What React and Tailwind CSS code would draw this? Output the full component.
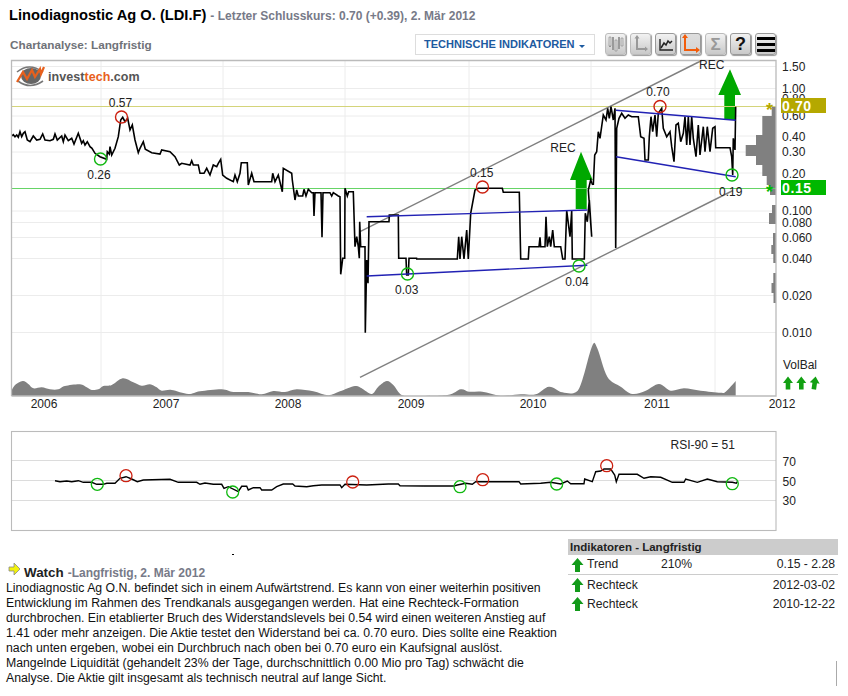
import React from "react";

const pts = (arr, ox, oy, s = 3) => {
  const out = [];
  for (let i = 0; i < arr.length; i += 2) out.push(`${(ox + arr[i] / s).toFixed(1)},${(oy + arr[i + 1] / s).toFixed(1)}`);
  return out.join(" ");
};

const smooth = (arr, ox, oy, s = 3) => {
  const p = [];
  for (let i = 0; i < arr.length; i += 2) p.push([ox + arr[i] / s, oy + arr[i + 1] / s]);
  let d = `M${p[0][0].toFixed(1)} 396 L${p[0][0].toFixed(1)} ${p[0][1].toFixed(1)}`;
  for (let i = 0; i < p.length - 1; i++) {
    const a = p[Math.max(i - 1, 0)], b = p[i], c = p[i + 1], e = p[Math.min(i + 2, p.length - 1)];
    const c1 = [b[0] + (c[0] - a[0]) / 6, b[1] + (c[1] - a[1]) / 6];
    const c2 = [c[0] - (e[0] - b[0]) / 6, c[1] - (e[1] - b[1]) / 6];
    d += ` C${c1[0].toFixed(1)} ${c1[1].toFixed(1)} ${c2[0].toFixed(1)} ${c2[1].toFixed(1)} ${c[0].toFixed(1)} ${c[1].toFixed(1)}`;
  }
  return d + ` L${p[p.length - 1][0].toFixed(1)} 396 Z`;
};

const price1 = [35,408,40,404,45,410,50,405,55,412,60,395,65,410,70,400,75,395,82,420,90,425,100,408,110,420,120,418,128,402,135,420,150,422,160,418,165,402,172,420,185,408,190,425,195,405,205,422,215,415,222,432,235,400,245,430,250,422,255,435,262,425,270,440,276,445,285,460,300,470,320,478,322,455,328,462,330,440,335,465,345,445,355,410,362,360,368,352,375,365,383,355,390,390,397,375,405,420,415,458,420,445,430,425,436,448,455,458,480,462,485,450,510,455,525,470,538,495,545,490,570,495,575,482,580,495,595,495,600,520,612,520,620,505,630,525,640,495,650,500,655,490,662,478,668,525,680,535,700,545,705,525,712,545,720,520,724,488,742,488,745,555,755,520,762,545,815,545,818,520,825,545,835,525,847,575,850,505,875,520,877,540];
const price2 = [877,0,885,60,890,30,895,48,908,48,912,28,918,48,925,28,935,38,940,38,942,108,945,38,963,38,966,172,969,38,990,38,995,48,1000,38,1015,48,1020,50,1022,283,1028,235,1034,235,1035,25,1042,48,1046,35,1060,35,1065,200,1070,170,1075,200,1078,235,1079,125,1082,200,1095,200,1096,458,1100,240,1104,310,1107,125,1167,125,1168,105,1195,105,1196,235,1218,235,1220,285,1225,285,1227,235,1252,235];
const price3 = [228,237,352,237,356,170,360,237,365,170,372,237,380,150,385,237,392,100,405,30,415,25,487,25,490,37,538,37,542,237,565,237,567,200,597,200,600,172,602,200,615,200,618,110,622,200,628,170,632,200,638,150,643,200,662,200,668,237,675,237,680,92,690,170,695,92,697,237,733,237,736,100,742,125,748,60,755,170,745,30,752,0,758,15];
const price4 = [70,270,74,180,80,170,85,110,90,130,100,60,108,75,113,40,118,70,123,35,130,75,135,40,137,459,140,100,147,70,155,55,165,70,175,60,185,65,205,65,212,125,222,130,225,195,235,195,238,125,243,65,248,110,255,60,260,125,265,55,275,40,280,100,290,125,300,110,305,155,312,200,318,90,325,85,332,140,340,115,345,65,350,150,355,65,360,150,365,65,370,130,378,185,385,90,390,180,400,95,405,170,412,95,420,170,428,100,435,95,437,158,480,158,485,185,488,240,490,130,495,165,497,35];
const vol1 = [33,635,45,615,68,603,85,612,100,625,125,622,150,628,175,628,195,618,240,613,260,622,275,630,295,628,310,618,335,615,368,595,400,607,425,617,450,613,470,622,485,632,515,630,565,642,600,634,665,628,700,636,745,636,785,643,820,633,855,636,890,628,940,634,985,646,1020,634,1065,618,1085,625,1115,642,1135,620,1160,603,1180,615,1205,645,1240,648];
const vol2 = [-30,648,70,645,110,628,135,635,175,635,230,647,290,643,335,643,375,620,415,637,455,637,475,600,505,497,520,505,550,590,590,620,625,642,665,632,705,612,740,632,780,625,830,632,890,638,905,635,935,603];
const rsi1 = [165,167,180,170,200,168,215,170,235,167,250,172,275,172,290,178,310,178,320,175,345,175,360,160,378,155,395,162,412,170,430,165,510,163,535,172,590,172,600,178,615,174,640,178,665,178,672,190,685,185,715,200,725,184,740,184,745,195,760,188,780,188,785,195,815,195,830,185,850,177,878,177,885,183,920,185,940,182,965,180,1020,180,1025,188,1035,178,1100,180,1165,177,1195,177,1200,182,1272,183];
const rsi2 = [0,183,90,183,100,180,125,175,145,178,155,170,285,170,290,177,350,175,380,172,410,177,430,168,440,176,480,176,482,162,505,170,515,140,530,138,540,132,560,132,572,150,577,170,585,148,640,148,660,160,680,155,710,157,745,172,780,172,785,162,820,172,850,162,880,170,925,172,937,175,940,170];

const gridV = [101, 223, 345, 469, 591, 715];
const gridH = [66.5, 88.5, 99, 116, 136, 152, 173, 211, 222.5, 237.5, 258.5, 295.5, 332.5];
const axis = [["1.50",71],["1.00",93],["0.80",103],["0.60",120],["0.40",141],["0.30",156],["0.20",178],["0.100",215],["0.080",227],["0.060",242],["0.040",263],["0.020",300],["0.010",337]];
const years = [["2006",44],["2007",166],["2008",288],["2009",411],["2010",533],["2011",657],["2012",782]];
const hist = [[106,116,771.7],[116,135,762.3],[135,145,756],[145,156,745.7],[156,165,756],[165,176,762.3],[176,185,766.7],[185,195,770],[205,213,772],[213,224,769],[233,245,773],[245,254,771.3],[254,263,773.3],[273,283,773.3],[283,293,771.5],[293,303,773.5]];
const labels = [["0.57",120.5,107],["0.26",99,179],["0.03",406.7,294],["0.15",481.7,177],["0.04",577,286],["0.70",658,96],["0.19",730.7,196],["REC",563,152],["REC",711.7,69]];
const mainCircles = [[100.5,159,"g"],[121.5,117,"r"],[407.5,274,"g"],[482.5,187,"r"],[579,266,"g"],[660,106.5,"r"],[732,175,"g"]];
const rsiCircles = [[97.3,484.3,"g"],[126,475.7,"r"],[232.7,492,"g"],[352.7,482,"r"],[460,486.7,"g"],[482.7,479.7,"r"],[556.7,484,"g"],[606.7,465.7,"r"],[732.3,483.7,"g"]];
const col = { g: "#10b810", r: "#cc2010" };

function Logo() {
  return (
    <g>
      <path d="M17 72 Q29 62 43 72" fill="none" stroke="#777" strokeWidth="1.6" />
      <path d="M18 81 Q30 90 43 81" fill="none" stroke="#777" strokeWidth="1.6" />
      <ellipse cx="31" cy="76" rx="10" ry="8" fill="#666" />
      <path d="M17 82 L23 72 L27 79 L32 70 L35 77 L40 69 L41 74 L44 67" fill="none" stroke="#e8601c" strokeWidth="2.2" />
      <text x="48" y="81" fontSize="12.5" fontWeight="700" fill="#555" letterSpacing="0.05">
        invest<tspan fill="#e8601c">tech</tspan>.com
      </text>
    </g>
  );
}

function MainChart() {
  return (
    <svg className="block w-[848px] h-[357px]" viewBox="0 58 848 357">
      {gridH.map((y) => <line key={y} x1="12" x2="776" y1={y} y2={y} stroke="#ececec" />)}
      {gridV.map((x) => <line key={x} x1={x} x2={x} y1="61" y2="396" stroke="#ececec" />)}
      <Logo />
      {hist.map(([a, b, x]) => <rect key={a} x={x} y={a} width={776 - x} height={b - a} fill="#808080" />)}
      <path d={smooth(vol1, 0, 180)} fill="#808080" />
      <path d={smooth(vol2, 424, 180)} fill="#808080" />
      <polygon points="581,151.7 592.7,180 586.7,180 586.7,209 575.7,209 575.7,180 570,180" fill="#00a800" />
      <polygon points="730,69.3 741,95 735,95 735,120 724.3,120 724.3,95 718.3,95" fill="#00a800" />
      <line x1="12" x2="776" y1="106.5" y2="106.5" stroke="#d4d47a" />
      <line x1="12" x2="776" y1="188.5" y2="188.5" stroke="#66d466" />
      <line x1="360" y1="231.7" x2="701.7" y2="60.5" stroke="#808080" strokeWidth="1.4" />
      <line x1="360" y1="377.3" x2="733" y2="190.5" stroke="#808080" strokeWidth="1.4" />
      <polyline points={pts(price1, 0, 0)} fill="none" stroke="#000" strokeWidth="1.6" />
      <polyline points={pts(price2, 0, 180)} fill="none" stroke="#000" strokeWidth="1.6" />
      <polyline points={pts(price3, 340, 180)} fill="none" stroke="#000" strokeWidth="1.6" />
      <polyline points={pts(price4, 570, 95)} fill="none" stroke="#000" strokeWidth="1.6" />
      <line x1="366.7" y1="216.7" x2="587.3" y2="210" stroke="#2222b4" strokeWidth="1.4" />
      <line x1="366.7" y1="276" x2="587.3" y2="265.3" stroke="#2222b4" strokeWidth="1.4" />
      <line x1="616" y1="110.3" x2="735.7" y2="120.3" stroke="#2222b4" strokeWidth="1.4" />
      <line x1="616" y1="156.7" x2="735.7" y2="176.7" stroke="#2222b4" strokeWidth="1.4" />
      {mainCircles.map(([x, y, c]) => <circle key={x} cx={x} cy={y} r="6" fill="none" stroke={col[c]} strokeWidth="1.4" />)}
      <path d="M11.5 396 V60.5 H776 V396 H11.5" fill="none" stroke="#bbb" strokeWidth="1.3" />
      {labels.map(([t, x, y]) => <text key={x} x={x} y={y} fontSize="12" fill="#222" textAnchor="middle">{t}</text>)}
      {axis.map(([t, y]) => <text key={t} x="782" y={y} fontSize="12" fill="#222">{t}</text>)}
      {years.map(([t, x]) => <text key={t} x={x} y="408" fontSize="12" fill="#222" textAnchor="middle">{t}</text>)}
      <rect x="781" y="98" width="45" height="15" fill="#b5a800" />
      <rect x="781" y="180" width="45" height="15" fill="#00b800" />
      <text x="782" y="110.5" fontSize="14" fontWeight="700" fill="#fff" letterSpacing="0.6">0.70</text>
      <text x="782" y="192.5" fontSize="14" fontWeight="700" fill="#fff" letterSpacing="0.6">0.15</text>
      <text x="769.5" y="116" fontSize="18" fontWeight="700" fill="#b5a800" textAnchor="middle">*</text>
      <text x="769.5" y="198" fontSize="18" fontWeight="700" fill="#00b800" textAnchor="middle">*</text>
      <text x="783" y="369" fontSize="12" fill="#222">VolBal</text>
      {[788, 801.3, 814.7].map((x, i) => (
        <polygon key={x} transform={i === 2 ? `rotate(8 ${x} 383)` : undefined} points={`${x},376.5 ${x + 5},383 ${x + 2.3},383 ${x + 2.3},389.5 ${x - 2.3},389.5 ${x - 2.3},383 ${x - 5},383`} fill="#12a012" />
      ))}
    </svg>
  );
}

function RsiChart() {
  return (
    <svg className="block w-[848px] h-[105px]" viewBox="0 428 848 105">
      {[460.5, 480.5, 500.5].map((y) => <line key={y} x1="12" x2="776" y1={y} y2={y} stroke="#dcdcdc" />)}
      <rect x="11.5" y="431.5" width="764.5" height="99" fill="none" stroke="#bbb" strokeWidth="1.1" />
      <polyline points={pts(rsi1, 0, 425)} fill="none" stroke="#000" strokeWidth="1.4" />
      <polyline points={pts(rsi2, 424, 425)} fill="none" stroke="#000" strokeWidth="1.4" />
      {rsiCircles.map(([x, y, c]) => <circle key={x} cx={x} cy={y} r="6" fill="none" stroke={col[c]} strokeWidth="1.3" />)}
      <text x="670.5" y="449" fontSize="12" fill="#222">RSI-90 = 51</text>
      <text x="782.5" y="466" fontSize="12" fill="#222">70</text>
      <text x="782.5" y="486" fontSize="12" fill="#222">50</text>
      <text x="782.5" y="505" fontSize="12" fill="#222">30</text>
    </svg>
  );
}

function ToolButton({ children, dark, active }) {
  return (
    <div className={`w-[21px] h-[22px] rounded-[3px] border flex items-center justify-center bg-linear-to-b shadow-[1px_1px_1px_#999] ${dark ? "border-[#999]" : "border-[#bbb]"} ${active ? "from-[#dedede] to-[#d2d2d2]" : "from-[#f2f2f2] to-[#c9c9c9]"}`}>
      {children}
    </div>
  );
}

const Ic = ({ children }) => <svg width="19" height="20" viewBox="0 0 19 20">{children}</svg>;

function Toolbar() {
  return (
    <div className="flex gap-[4px] ml-[10px] mt-[-1px]">
      <ToolButton>
        <Ic><path d="M4 4v9M7 3v13M10 6v11M13 3v12M16 4v8" stroke="#999" strokeWidth="2" fill="none" /><path d="M3 3h2v9H3zM9 6h2v11H9zM15 4h2v8h-2z" fill="#ddd" stroke="#888" strokeWidth="0.6" /></Ic>
      </ToolButton>
      <ToolButton>
        <Ic><path d="M6 3v12h9" stroke="#999" strokeWidth="2" fill="none" /><path d="M6 1l-2.5 3.5h5zM17 15l-3-2.5v5z" fill="#999" /></Ic>
      </ToolButton>
      <ToolButton dark>
        <Ic><path d="M4 5v11h13" stroke="#222" strokeWidth="1.4" fill="none" /><path d="M5 14l3-5 2 2 2-4 2 2 2-2" stroke="#222" strokeWidth="1.5" fill="none" /></Ic>
      </ToolButton>
      <ToolButton dark active>
        <Ic><path d="M4 3v13h12" stroke="#f25c0a" strokeWidth="2" fill="none" /><path d="M4 0l-3 4h6zM19 16l-4-3v6z" fill="#f25c0a" /></Ic>
      </ToolButton>
      <ToolButton>
        <span className="text-[17px] leading-none font-bold text-[#999]">Σ</span>
      </ToolButton>
      <ToolButton dark>
        <span className="text-[18px] leading-none font-bold text-[#111]">?</span>
      </ToolButton>
      <ToolButton dark>
        <div className="flex flex-col gap-[3px]">
          <div className="w-[18px] h-[3px] bg-black" />
          <div className="w-[18px] h-[3px] bg-black" />
          <div className="w-[18px] h-[3px] bg-black" />
        </div>
      </ToolButton>
    </div>
  );
}

function UpArrow() {
  return (
    <svg width="13" height="14" viewBox="0 0 13 14" className="shrink-0">
      <polygon points="6.5,0 12.5,7 9,7 9,14 4,14 4,7 0.5,7" fill="#129a1a" />
    </svg>
  );
}

function Row({ label, mid, right, h }) {
  return (
    <div className={`flex items-center pl-[3px] pr-[3px] text-[12.2px] text-[#222] ${h}`}>
      <UpArrow />
      <span className="ml-[3px] w-[74px]">{label}</span>
      <span className="flex-1">{mid}</span>
      <span>{right}</span>
    </div>
  );
}

export default function App() {
  return (
    <div className="w-[848px] h-[696px] overflow-hidden bg-white font-['Liberation_Sans',Arial,sans-serif]">
      <div className="h-[30px] pl-[9px] pt-[4px] flex items-baseline whitespace-nowrap">
        <span className="text-[14.67px] font-bold text-black">Linodiagnostic Ag O. (LDI.F)</span>
        <span className="ml-[4px] text-[12px] font-bold text-[#777a88]">- Letzter Schlusskurs: 0.70 (+0.39), 2. Mär 2012</span>
      </div>
      <div className="h-[28px] flex items-start pl-[10px]">
        <span className="text-[11.75px] font-bold text-[#6f7278] mt-[6px] w-[405px]">Chartanalyse: Langfristig</span>
        <div className="w-[180px] h-[21px] mt-[4px] border border-[#ddd] flex items-center pl-[8px] text-[11.05px] font-bold text-[#1d5aa0] whitespace-nowrap">
          TECHNISCHE INDIKATOREN
          <span className="ml-[4px] mt-[3px] w-0 h-0 border-x-[3px] border-x-transparent border-t-[3px] border-t-[#1d5aa0]" />
        </div>
        <div className="mt-[4px]"><Toolbar /></div>
      </div>
      <MainChart />
      <div className="h-[13px]" />
      <RsiChart />
      <div className="flex h-[163px]">
        <div className="w-[568px] pl-[6px]">
          <div className="w-[2px] h-[1px] bg-black ml-[226px] mt-[21px]" />
          <div className="flex items-baseline mt-[8px] pl-[2px] h-[18px]">
            <svg width="14" height="14" viewBox="0 0 14 14" className="self-start">
              <polygon points="1,4 6,4 6,0 12,6 6,12 6,8 1,8" fill="#f2f20c" stroke="#888" strokeWidth="0.8" />
            </svg>
            <span className="ml-[2px] text-[13.4px] font-bold text-[#222]">Watch</span>
            <span className="ml-[4px] text-[12px] font-bold text-[#777a88]">-Langfristig, 2. Mär 2012</span>
          </div>
          <p className="text-[12.27px] leading-[15px] text-[#111] whitespace-nowrap">
            Linodiagnostic Ag O.N. befindet sich in einem Aufwärtstrend. Es kann von einer weiterhin positiven<br />
            Entwicklung im Rahmen des Trendkanals ausgegangen werden. Hat eine Rechteck-Formation<br />
            durchbrochen. Ein etablierter Bruch des Widerstandslevels bei 0.54 wird einen weiteren Anstieg auf<br />
            1.41 oder mehr anzeigen. Die Aktie testet den Widerstand bei ca. 0.70 euro. Dies sollte eine Reaktion<br />
            nach unten ergeben, wobei ein Durchbruch nach oben bei 0.70 euro ein Kaufsignal auslöst.<br />
            Mangelnde Liquidität (gehandelt 23% der Tage, durchschnittlich 0.00 Mio pro Tag) schwächt die<br />
            Analyse. Die Aktie gilt insgesamt als technisch neutral auf lange Sicht.
          </p>
        </div>
        <div className="w-[270px] flex flex-col pt-[6px]">
          <div className="h-[16px] bg-[#cccccc] pl-[2px] text-[11.5px] leading-[16px] font-bold text-[#222]">Indikatoren - Langfristig</div>
          <Row label="Trend" mid="210%" right="0.15 - 2.28" h="h-[19px]" />
          <div className="h-px bg-[#ccc]" />
          <Row label="Rechteck" right="2012-03-02" h="h-[20px]" />
          <Row label="Rechteck" right="2010-12-22" h="h-[18px]" />
          <div className="w-px h-[25px] bg-[#aaa] self-end mr-[1px] mt-[48px]" />
        </div>
      </div>
    </div>
  );
}
